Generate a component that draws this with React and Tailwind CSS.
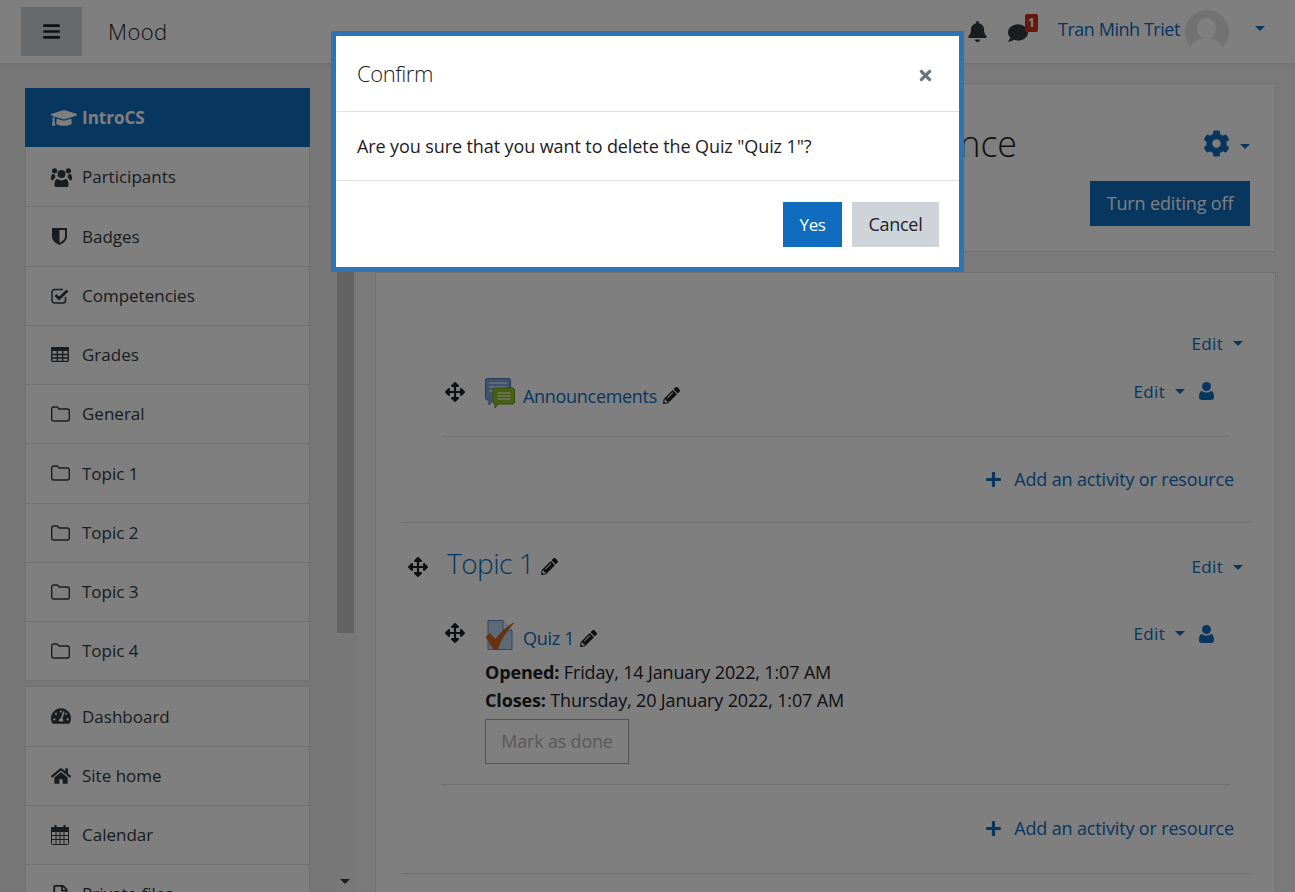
import React from "react";
import {
  FaBars, FaBell, FaComment, FaCog, FaGraduationCap, FaTachometerAlt, FaHome, FaRegFile,
  FaArrowsAlt, FaPencilAlt, FaPlus, FaTimes,
} from "react-icons/fa";

const Caret = ({ className = "" }) => (
  <span className={`inline-block w-0 h-0 border-x-[5.5px] border-x-transparent border-t-[5.5px] border-t-[#0f6cbf] ${className}`} />
);

const UsersIcon = () => (
  <svg viewBox="0 0 21 20" className="w-[21px] h-[20px]" fill="#343a40">
    <circle cx="10.5" cy="7" r="4" />
    <circle cx="3.6" cy="3.8" r="2.6" />
    <circle cx="17.4" cy="3.8" r="2.6" />
    <path d="M5 20c-1 0-1.500-.7-1.500-1.700 0-3.800.8-6.300 3-6.300 1 .9 2.500 1.400 4 1.400s3-.5 4-1.400c2.200 0 3 2.500 3 6.300 0 1-.5 1.700-1.500 1.700z" />
    <path d="M0 11.500C0 8.500.5 7 2 7c.5.500 1.200.8 2.200.8-.3.800-.2 1.700.4 2.600-1.300.8-2 1.700-2.400 2.800H1c-.6 0-1-.7-1-1.700zM21 11.500c0-3-.5-4.500-2-4.500-.5.500-1.200.8-2.200.8.3.800.2 1.700-.4 2.600 1.300.8 2 1.700 2.400 2.800H20c.6 0 1-.7 1-1.700z" />
  </svg>
);

const ShieldHalf = () => (
  <svg viewBox="0 0 15 17" className="w-[15px] h-[17px] ml-[1px]" fill="#343a40">
    <path fillRule="evenodd" d="M0 0h15v8.500c0 4-3.700 7-7.500 8.500C3.700 15.500 0 12.500 0 8.500zM7.500 2v12.800c2.800-1.300 5.500-3.300 5.500-6.300V2z" />
  </svg>
);

const CheckIcon = () => (
  <svg viewBox="0 0 18 16" className="w-[18px] h-[16px]" fill="none" stroke="#343a40">
    <path d="M14.500 9v3.500a2.500 2.500 0 0 1-2.500 2.500H3.500A2.500 2.500 0 0 1 1 12.500V4a2.500 2.500 0 0 1 2.500-2.500H12" strokeWidth="1.500" />
    <path d="M4.500 7l3.500 3.500L16.500 2.500" strokeWidth="2.800" />
  </svg>
);

const TableIcon = () => (
  <svg viewBox="0 0 18 15" className="w-[18px] h-[15px]" fill="none" stroke="#343a40" strokeWidth="1.300">
    <rect x=".7" y=".7" width="16.600" height="13.600" rx="1" />
    <rect x="0" y="0" width="18" height="4" rx="1" fill="#343a40" stroke="none" />
    <path d="M6.300 4v10M11.700 4v10M1 7.500h16M1 11h16" />
  </svg>
);

const FolderIcon = () => (
  <svg viewBox="0 0 19 16" className="w-[19px] h-[16px]" fill="none" stroke="#343a40" strokeWidth="1.400">
    <path d="M.7 3A2 2 0 0 1 2.700 1h3.500l2 2h8.100a2 2 0 0 1 2 2v8a2 2 0 0 1-2 2H2.700a2 2 0 0 1-2-2z" />
  </svg>
);

const CalendarIcon = () => (
  <svg viewBox="0 0 18 20" className="w-[18px] h-[20px]" fill="none" stroke="#343a40" strokeWidth="1">
    <rect x=".5" y="2.500" width="17" height="17" rx="1" />
    <rect x="0" y="2" width="18" height="5" rx="1" fill="#343a40" stroke="none" />
    <path d="M5 7v12M9 7v12M13 7v12M1 10.500h16M1 14.500h16" />
    <path d="M4.500 0v4M13.500 0v4" strokeWidth="2.200" />
  </svg>
);

const PersonIcon = () => (
  <svg viewBox="0 0 15 18" className="w-[15px] h-[18px] ml-[14px] mr-[16px]" fill="#0f6cbf">
    <circle cx="7.500" cy="4.500" r="4.500" />
    <path d="M3 18c-2 0-3-1-3-2.800 0-3.500 1-6.200 3.200-6.200 1.200 1 2.700 1.500 4.300 1.500s3.100-.5 4.300-1.500c2.200 0 3.200 2.700 3.200 6.200 0 1.800-1 2.800-3 2.800z" />
  </svg>
);

const course = [
  { label: "Participants", icon: <UsersIcon /> },
  { label: "Badges", icon: <ShieldHalf /> },
  { label: "Competencies", icon: <CheckIcon /> },
  { label: "Grades", icon: <TableIcon /> },
  { label: "General", icon: <FolderIcon /> },
  { label: "Topic 1", icon: <FolderIcon /> },
  { label: "Topic 2", icon: <FolderIcon /> },
  { label: "Topic 3", icon: <FolderIcon /> },
  { label: "Topic 4", icon: <FolderIcon /> },
];

const site = [
  { label: "Dashboard", icon: <FaTachometerAlt size={20} className="text-[#343a40]" /> },
  { label: "Site home", icon: <FaHome size={20} className="text-[#343a40]" /> },
  { label: "Calendar", icon: <CalendarIcon /> },
  { label: "Private files", icon: <FaRegFile size={19} className="text-[#343a40]" /> },
];

const NavItem = ({ label, icon }) => (
  <div className="h-[59.25px] flex items-center pl-[25px] border-b border-[#dee2e6] text-[#343a40] shrink-0">
    <span className="w-[31px] flex items-center justify-start">{icon}</span>
    <span>{label}</span>
  </div>
);

const ForumIcon = () => (
  <svg viewBox="0 0 30 30" className="w-[30px] h-[30px]">
    <path d="M2 .5h22a2 2 0 0 1 1.500 1.500v18a2 2 0 0 1-2 2H8l-4 5v-5H2a2 2 0 0 1-1.500-2V2A2 2 0 0 1 2 .5z" fill="#7ea3d8" stroke="#4f79b8" />
    <path d="M4 5h18M4 9h18M4 13h18" stroke="#dfe8f5" strokeWidth="1.500" />
    <path d="M10 10h18a2 2 0 0 1 1.500 2v12a2 2 0 0 1-1.500 2H13l-3 4v-4a2 2 0 0 1-2-2V12a2 2 0 0 1 2-2z" fill="#8fbf2a" stroke="#6e9a15" />
    <path d="M12.500 15h13M12.500 18h13M12.500 21h13" stroke="#e3efc2" strokeWidth="1.500" />
  </svg>
);

const QuizIcon = () => (
  <svg viewBox="0 0 30 30" className="w-[30px] h-[30px]">
    <path d="M3 .5h15l9 10v19H3z" fill="#bcd3ec" stroke="#6f8fc4" />
    <path d="M18 .5v10h9" fill="#e3edf7" stroke="#6f8fc4" />
    <path d="M1 17l4-3.500 5.500 6C15 13 22 6 29 3 22 10 16 19 12.500 29H8.500z" fill="#d9641c" stroke="#b34d10" strokeWidth=".5" />
  </svg>
);

const Avatar = () => (
  <svg viewBox="0 0 44 44" className="w-[44px] h-[44px] block">
    <defs>
      <clipPath id="avatar-clip"><circle cx="22" cy="22" r="22" /></clipPath>
    </defs>
    <g clipPath="url(#avatar-clip)">
      <rect width="44" height="44" fill="#e4e4e4" />
      <ellipse cx="21.500" cy="18.500" rx="9.500" ry="10.500" fill="#ffffff" />
      <ellipse cx="21.500" cy="46" rx="19" ry="18" fill="#ffffff" />
    </g>
  </svg>
);

const Edit = ({ person }) => (
  <div className="flex items-center text-[#0f6cbf] text-[17px] tracking-[0.3px]">
    <span>Edit</span>
    <Caret className="ml-[10px]" />
    {person && <PersonIcon />}
  </div>
);

const AddActivity = () => (
  <div className="flex justify-end items-center text-[#0f6cbf] pr-[16px]">
    <FaPlus size={17} className="mr-[12px] -ml-[1px]" />
    <span>Add an activity or resource</span>
  </div>
);

export default function App() {
  return (
    <div className="relative h-[892px] overflow-hidden bg-[#f4f4f4] text-[#1d2125] text-[18px] font-['Open_Sans',sans-serif] tracking-[-0.15px]">
      <header className="h-[63px] bg-white shadow-[0_2px_4px_rgba(0,0,0,0.08)] flex items-center pl-[21px] pr-[30px] relative z-10">
        <button className="w-[61px] h-[49px] bg-[#ced4da] flex items-center justify-center text-[#1d2125]">
          <FaBars size={19} />
        </button>
        <span className="ml-[26px] text-[22px] font-light tracking-[0.4px]">Mood</span>
        <div className="ml-auto flex items-center">
          <FaBell size={21} className="text-[#343a40]" />
          <div className="relative ml-[20px] mt-[3px]">
            <FaComment size={20} className="text-[#343a40]" />
            <span className="absolute -top-[9px] -right-[10px] w-[13px] h-[18px] bg-[#ca3120] rounded-[2px] text-white text-[12px] font-bold flex items-center justify-center">1</span>
          </div>
          <span className="ml-[30px] mr-[5px] mb-[4px] text-[#0f6cbf] tracking-[-0.45px]">Tran Minh Triet</span>
          <Avatar />
          <Caret className="ml-[26px] mb-[6px]" />
        </div>
      </header>

      <div className="flex h-[829px]">
        <aside className="w-[356px] shrink-0 flex bg-[#eeeeee] overflow-hidden text-[17px] tracking-normal">
          <div className="w-[337px] pl-[25px] pt-[25px] pr-[27px] shrink-0">
            <div className="h-[59px] flex items-center pl-[26px] bg-[#0f6cbf] text-white font-bold">
              <FaGraduationCap size={26} className="mr-[5px]" />
              <span className="mt-[1px]">IntroCS</span>
            </div>
            <div className="border-x border-t border-t-transparent border-[#dee2e6] bg-white">
              {course.map((i) => <NavItem key={i.label} {...i} />)}
            </div>
            <div className="mt-[5px] border-x border-t border-[#dee2e6] bg-white">
              {site.map((i) => <NavItem key={i.label} {...i} />)}
            </div>
          </div>
          <div className="w-[19px] bg-[#f1f1f1] flex flex-col relative">
            <div className="mt-[206px] w-[17px] h-[364px] bg-[#c7c7c7]" />
            <Caret className="absolute left-[3px] bottom-[8px] !border-t-[#343a40]" />
          </div>
        </aside>

        <main className="flex-1 pl-[19px] pr-[19px] pt-[20px] min-w-0">
          <section className="h-[169px] bg-white border border-[#dee2e6] flex flex-col pr-[25px] pt-[32px]">
            <div className="flex items-center justify-end h-[55px]">
              <h1 className="text-[36px] font-light mr-[186px] whitespace-nowrap">Science</h1>
              <FaCog size={27} className="text-[#0f6cbf]" />
              <Caret className="ml-[10px] mt-[6px]" />
            </div>
            <div className="flex justify-end mt-[10px]">
              <button className="w-[160px] h-[45px] bg-[#0f6cbf] text-white">Turn editing off</button>
            </div>
          </section>

          <section className="mt-[20px] h-[700px] bg-white border border-[#dee2e6] px-[25px]">
            <div className="pt-[58px] border-b border-[#dee2e6] h-[250px]">
              <div className="flex justify-end pr-[7px]"><Edit /></div>
              <div className="mt-[21px] ml-[40px] mr-[20px] border-b border-[#dee2e6] flex items-start h-[59px]">
                <FaArrowsAlt size={20} className="mt-[4px] ml-[4px] text-[#1d2125]" />
                <span className="ml-[20px]"><ForumIcon /></span>
                <span className="ml-[8px] mt-[5px] text-[#0f6cbf] tracking-[-0.3px]">Announcements</span>
                <FaPencilAlt size={17} className="ml-[6px] mt-[9px] text-[#1d2125]" />
                <div className="ml-auto mt-[1px]"><Edit person /></div>
              </div>
              <div className="mt-[29px]"><AddActivity /></div>
            </div>

            <div className="pt-[20px]">
              <div className="flex items-center h-[44px] pl-[7px] pr-[7px]">
                <FaArrowsAlt size={20} className="mt-[4px] text-[#1d2125]" />
                <span className="ml-[19px] mb-[4px] text-[28px] font-light text-[#0f6cbf] tracking-[-0.5px]">Topic 1</span>
                <FaPencilAlt size={17} className="ml-[7px] mt-[2px] text-[#1d2125]" />
                <div className="ml-auto mt-[4px]"><Edit /></div>
              </div>
              <div className="mt-[33px] ml-[40px] mr-[20px] pb-[20px] border-b border-[#dee2e6] flex items-start">
                <FaArrowsAlt size={20} className="mt-[3px] ml-[4px] text-[#1d2125]" />
                <div className="ml-[20px]">
                  <div className="flex items-center h-[30px]">
                    <QuizIcon />
                    <span className="ml-[8px] mt-[6px] text-[#0f6cbf] tracking-[-0.3px]">Quiz 1</span>
                    <FaPencilAlt size={17} className="ml-[6px] mt-[6px] text-[#1d2125]" />
                  </div>
                  <div className="mt-[8px] leading-[28px]"><b>Opened:</b> Friday, 14 January 2022, 1:07 AM</div>
                  <div className="leading-[28px]"><b>Closes:</b> Thursday, 20 January 2022, 1:07 AM</div>
                  <button className="mt-[5px] w-[144px] h-[45px] border border-[#a8a8a8] text-[#b4b4b4] tracking-[-0.2px]">Mark as done</button>
                </div>
                <div className="ml-auto mt-[1px]"><Edit person /></div>
              </div>
              <div className="mt-[30px]"><AddActivity /></div>
              <div className="mt-[31px] border-b border-[#dee2e6]" />
            </div>
          </section>
        </main>
      </div>

      <div className="absolute inset-0 bg-black/50 z-20" />

      <div className="absolute z-30 left-[331px] top-[31px] w-[633px] h-[241px] bg-white border-[5px] border-[#2e74b5] flex flex-col">
        <div className="h-[76px] border-b border-[#dee2e6] flex items-center justify-between pl-[21px] pr-[25px]">
          <span className="text-[22px] font-light tracking-[-0.45px]">Confirm</span>
          <FaTimes size={17} className="text-[#6a737b] mt-[3px]" />
        </div>
        <div className="h-[69px] border-b border-[#dee2e6] flex items-center pl-[21px] tracking-[-0.1px]">Are you sure that you want to delete the Quiz "Quiz 1"?</div>
        <div className="flex-1 flex justify-end items-start gap-[10px] pt-[21px] pr-[20px]">
          <button className="w-[59px] h-[45px] bg-[#0f6cbf] text-white text-[17px] tracking-[-0.45px]">Yes</button>
          <button className="w-[87px] h-[45px] bg-[#ced4da] text-[#1d2125] tracking-[-0.3px]">Cancel</button>
        </div>
      </div>
    </div>
  );
}
